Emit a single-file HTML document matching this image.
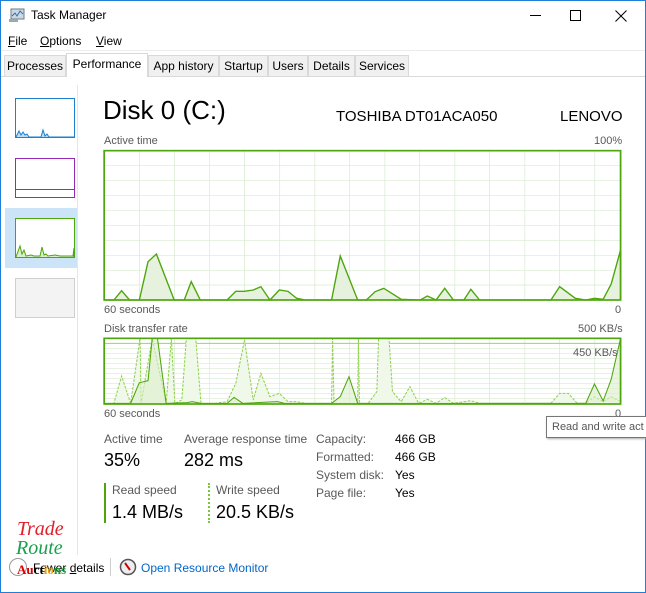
<!DOCTYPE html>
<html><head><meta charset="utf-8"><style>
*{margin:0;padding:0;box-sizing:border-box}
body{width:646px;height:593px;overflow:hidden;background:#fff;font-family:"Liberation Sans",sans-serif;font-size:12px;color:#000;position:relative}
.a{position:absolute;white-space:nowrap}
.g{color:#595959}
.tab{position:absolute;top:55px;height:21px;background:#f0f0f0;border:1px solid #d9d9d9;border-bottom:none;font-size:12px;line-height:20px;text-align:center}
</style></head><body>
<div class="a" style="left:0;top:0;width:646px;height:593px;border:1px solid #1e7fd8"></div>
<svg class="a" style="left:8px;top:8px" width="18" height="16" viewBox="0 0 18 16"><rect x="3" y="1" width="13" height="10" fill="#cfd8e0" stroke="#6b7b88"/><polyline points="4,8 7,5 9,8 12,3 15,6" fill="none" stroke="#2a6fb8"/><rect x="1" y="11" width="9" height="3" fill="#9aa"/></svg>
<div class="a" style="left:31px;top:8px;font-size:12px">Task Manager</div>
<div class="a" style="left:530px;top:15px;width:11px;height:1px;background:#000"></div>
<div class="a" style="left:570px;top:10px;width:11px;height:11px;border:1px solid #000"></div>
<svg class="a" style="left:615px;top:10px" width="12" height="12"><path d="M0.5 0.5L11.5 11.5M11.5 0.5L0.5 11.5" stroke="#000" stroke-width="1"/></svg>
<div class="a" style="left:8px;top:34px"><u>F</u>ile</div>
<div class="a" style="left:40px;top:34px"><u>O</u>ptions</div>
<div class="a" style="left:96px;top:34px"><u>V</u>iew</div>
<div class="a" style="left:1px;top:50px;width:644px;height:1px;background:#ececec"></div>
<div class="a" style="left:1px;top:76px;width:644px;height:1px;background:#d9d9d9"></div>
<div class="tab" style="left:4px;width:62px">Processes</div>
<div class="tab" style="left:66px;top:53px;height:24px;width:82px;background:#fff;line-height:20px">Performance</div>
<div class="tab" style="left:148px;width:71px">App history</div>
<div class="tab" style="left:219px;width:49px">Startup</div>
<div class="tab" style="left:268px;width:40px">Users</div>
<div class="tab" style="left:308px;width:47px">Details</div>
<div class="tab" style="left:355px;width:54px">Services</div>
<!-- sidebar -->
<div class="a" style="left:77px;top:85px;width:1px;height:470px;background:#e6e6e6"></div>
<svg class="a" style="left:15px;top:98px" width="60" height="40"><rect x="0.5" y="0.5" width="59" height="39" fill="#fff" stroke="#1b80d0"/><polyline points="1,39 4,33 6,37 8,34 10,37 12,36 14,39 26,39 28,32 30,38 32,36 34,39 62,39" fill="#bfdcf3" stroke="#1b80d0"/></svg>
<svg class="a" style="left:15px;top:158px" width="60" height="40"><rect x="0.5" y="0.5" width="59" height="39" fill="#fff" stroke="#9928b8"/><line x1="0" y1="31.5" x2="60" y2="31.5" stroke="#9928b8"/></svg>
<div class="a" style="left:5px;top:208px;width:72px;height:60px;background:#cce4f7"></div>
<svg class="a" style="left:15px;top:218px" width="60" height="40"><rect x="0.5" y="0.5" width="59" height="39" fill="#fff" stroke="#4da60c"/><polyline points="1,39 5,28 7,36 9,32 11,38 16,37 19,38 25,38 27,29 29,37 31,36 33,38 40,37 45,38 58,38 59,30 59,39" fill="#dcefcc" stroke="#4da60c"/></svg>
<div class="a" style="left:15px;top:278px;width:60px;height:40px;background:#f3f3f3;border:1px solid #cfcfcf"></div>
<!-- header -->
<div class="a" style="left:103px;top:95px;font-size:26px">Disk 0 (C:)</div>
<div class="a" style="left:336px;top:108px;font-size:15px">TOSHIBA DT01ACA050</div>
<div class="a" style="left:560px;top:108px;font-size:15px">LENOVO</div>
<div class="a g" style="left:104px;top:135px;font-size:11px">Active time</div>
<div class="a g" style="left:594px;top:135px;font-size:11px">100%</div>
<svg class="a" style="left:100px;top:130px" width="546" height="190" viewBox="0 0 1568 570" preserveAspectRatio="none">
<g stroke="#d9ead0" stroke-width="2">
<path d="M113 62V510M214 62V510M315 62V510M415 62V510M516 62V510M617 62V510M717 62V510M818 62V510M918 62V510M1019 62V510M1119 62V510M1220 62V510M1320 62V510M1421 62V510"/>
<path d="M12 107H1495M12 152H1495M12 197H1495M12 242H1495M12 286H1495M12 331H1495M12 376H1495M12 421H1495M12 465H1495"/>
</g>
<polyline points="12,510 40,510 62,482 85,510 100,510 113,510 138,395 162,372 213,510 242,510 262,455 288,510 365,510 390,484 415,484 440,480 462,470 488,510 515,480 540,484 565,505 590,510 665,510 690,378 740,510 765,510 790,485 815,475 865,508 920,510 940,498 965,510 990,475 1015,510 1045,510 1065,478 1090,510 1295,510 1320,470 1365,505 1395,510 1420,505 1445,508 1468,462 1495,360 1495,510" fill="#e6f2dd" stroke="#4da60c" stroke-width="4"/>
<rect x="12" y="62" width="1483" height="448" fill="none" stroke="#4da60c" stroke-width="5"/>
</svg>
<div class="a g" style="left:104px;top:304px;font-size:11px">60 seconds</div>
<div class="a g" style="left:615px;top:304px;font-size:11px">0</div>
<div class="a g" style="left:104px;top:323px;font-size:11px">Disk transfer rate</div>
<div class="a g" style="left:578px;top:323px;font-size:11px">500 KB/s</div>
<svg class="a" style="left:100px;top:320px" width="546" height="100" viewBox="0 0 1568 300" preserveAspectRatio="none">
<g stroke="#d9ead0" stroke-width="2">
<path d="M113 55V252M214 55V252M315 55V252M415 55V252M516 55V252M617 55V252M717 55V252M818 55V252M918 55V252M1019 55V252M1119 55V252M1220 55V252M1320 55V252M1421 55V252"/>
<path d="M12 85H1495M12 100H1495M12 115H1495M12 130H1495M12 145H1495M12 160H1495M12 175H1495M12 190H1495M12 205H1495M12 220H1495M12 235H1495"/>
</g>
<line x1="12" y1="70" x2="1495" y2="70" stroke="#9bd26f" stroke-width="3"/>
<polyline points="12,250 40,250 62,168 88,250 115,55 118,250 150,55 190,250 205,55 215,250 235,240 248,55 275,55 290,250 330,250 365,245 390,190 415,60 440,240 462,160 488,230 515,220 540,245 565,245 590,250 665,250 668,55 672,250 740,250 742,55 745,250 770,250 795,215 800,55 830,55 840,215 865,245 890,200 915,250 940,238 965,250 990,233 1015,250 1065,242 1090,250 1295,250 1320,220 1345,220 1370,250 1395,250 1420,230 1445,245 1468,230 1495,245" fill="#f0f8ea" stroke="#8fd14f" stroke-width="3" stroke-dasharray="8,4"/>
<polyline points="12,250 88,250 113,188 138,182 150,55 165,55 190,250 250,248 265,245 290,250 365,250 385,232 410,250 510,245 530,250 665,250 690,230 715,170 740,250 1395,250 1420,192 1445,243 1468,178 1495,55 1495,250" fill="#dcefcc" fill-opacity="0.6" stroke="#4da60c" stroke-width="3"/>
<rect x="12" y="55" width="1483" height="197" fill="none" stroke="#4da60c" stroke-width="5"/>
</svg>
<div class="a g" style="left:573px;top:347px;font-size:11px">450 KB/s</div>
<div class="a g" style="left:104px;top:408px;font-size:11px">60 seconds</div>
<div class="a g" style="left:615px;top:408px;font-size:11px">0</div>
<div class="a" style="left:546px;top:416px;width:105px;height:22px;border:1px solid #767676;background:#fff;font-size:11px;line-height:20px;padding-left:5px;color:#575757;box-shadow:1px 1px 2px #aaa">Read and write act</div>
<!-- stats -->
<div class="a g" style="left:104px;top:432px">Active time</div>
<div class="a" style="left:104px;top:450px;font-size:18px">35%</div>
<div class="a g" style="left:184px;top:432px">Average response time</div>
<div class="a" style="left:184px;top:450px;font-size:18px">282 ms</div>
<div class="a" style="left:104px;top:483px;width:2px;height:40px;background:#4da60c"></div>
<div class="a g" style="left:112px;top:483px">Read speed</div>
<div class="a" style="left:112px;top:502px;font-size:18px">1.4 MB/s</div>
<div class="a" style="left:208px;top:483px;width:0;height:40px;border-left:2px dotted #7cc83a"></div>
<div class="a g" style="left:216px;top:483px">Write speed</div>
<div class="a" style="left:216px;top:502px;font-size:18px">20.5 KB/s</div>
<div class="a g" style="left:316px;top:432px">Capacity:</div><div class="a" style="left:395px;top:432px">466 GB</div>
<div class="a g" style="left:316px;top:450px">Formatted:</div><div class="a" style="left:395px;top:450px">466 GB</div>
<div class="a g" style="left:316px;top:468px">System disk:</div><div class="a" style="left:395px;top:468px">Yes</div>
<div class="a g" style="left:316px;top:486px">Page file:</div><div class="a" style="left:395px;top:486px">Yes</div>
<!-- bottom -->
<div class="a" style="left:9px;top:558px;width:18px;height:18px;border:1px solid #999;border-radius:50%"></div>
<div class="a" style="left:33px;top:561px">Fewer <u>d</u>etails</div>
<div class="a" style="left:110px;top:558px;width:1px;height:18px;background:#ccc"></div>
<svg class="a" style="left:119px;top:558px" width="18" height="18"><circle cx="9" cy="9" r="7.5" fill="#eee" stroke="#555" stroke-width="1.5"/><path d="M6 5L11 12" stroke="#c00" stroke-width="2"/></svg>
<div class="a" style="left:141px;top:561px;color:#0066cc">Open Resource Monitor</div>
<div class="a" style="left:17px;top:518px;font-family:'Liberation Serif',serif;font-style:italic;font-size:20px;color:#e0202a">Trade</div>
<div class="a" style="left:16px;top:537px;font-family:'Liberation Serif',serif;font-style:italic;font-size:20px;color:#1ca050">Route</div>
<div class="a" style="left:17px;top:562px;font-family:'Liberation Serif',serif;font-weight:bold;font-size:13px"><span style="color:#d00">Au</span><span style="color:#000">ct</span><span style="color:#e8a000">io</span><span style="color:#1a9a3a">ns</span></div>
</body></html>
